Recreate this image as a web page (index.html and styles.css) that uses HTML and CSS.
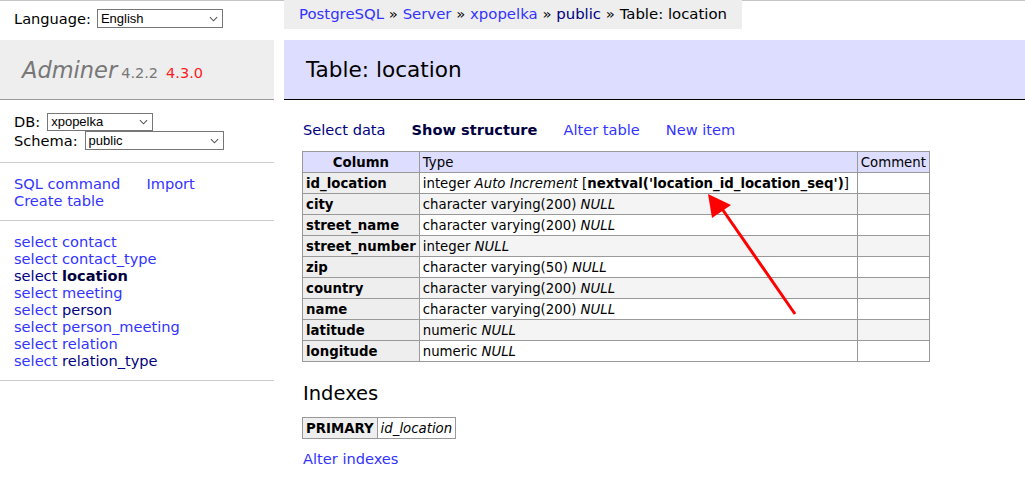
FILE: index.html
```html
<!DOCTYPE html>
<html>
<head>
<meta charset="utf-8">
<link rel="stylesheet" href="styles.css">
</head>
<body>
<div class="page">
  <aside class="menu">
    <div class="lang">
      <span>Language:</span>
      <span class="sel sel-lang"><select><option>English</option></select><svg viewBox="0 0 10 6" class="chev"><path d="M1 1 L5 5 L9 1" fill="none" stroke="#555" stroke-width="1.2"/></svg></span>
    </div>
    <div class="logo"><span class="brand">Adminer</span><span class="ver">4.2.2</span><span class="newver">4.3.0</span></div>
    <div class="dbsel">
      <div class="row">DB: <span class="sel sel-db"><select><option>xpopelka</option></select><svg viewBox="0 0 10 6" class="chev"><path d="M1 1 L5 5 L9 1" fill="none" stroke="#555" stroke-width="1.2"/></svg></span></div>
      <div class="row">Schema: <span class="sel sel-schema"><select><option>public</option></select><svg viewBox="0 0 10 6" class="chev"><path d="M1 1 L5 5 L9 1" fill="none" stroke="#555" stroke-width="1.2"/></svg></span></div>
    </div>
    <div class="cmds">
      <div><a href="#" class="sqlcmd">SQL command</a><a href="#">Import</a></div>
      <div><a href="#">Create table</a></div>
    </div>
    <ul class="tables">
      <li><a href="#">select</a> <a href="#">contact</a></li>
      <li><a href="#">select</a> <a href="#">contact_type</a></li>
      <li><a href="#" class="v">select</a> <a href="#" class="active">location</a></li>
      <li><a href="#">select</a> <a href="#">meeting</a></li>
      <li><a href="#">select</a> <a href="#" class="v">person</a></li>
      <li><a href="#">select</a> <a href="#">person_meeting</a></li>
      <li><a href="#">select</a> <a href="#">relation</a></li>
      <li><a href="#">select</a> <a href="#" class="v">relation_type</a></li>
    </ul>
  </aside>
  <main class="content">
    <div class="crumbs-wrap"><p class="crumbs"><a href="#">PostgreSQL</a> » <a href="#">Server</a> » <a href="#">xpopelka</a> » <a href="#" class="v">public</a> » Table: location</p></div>
    <h2>Table: location</h2>
    <p class="links"><a href="#" class="v">Select data</a><a href="#" class="v active">Show structure</a><a href="#">Alter table</a><a href="#">New item</a></p>
    <table class="struct">
      <thead>
        <tr><th class="colh">Column</th><td class="typecol">Type</td><td>Comment</td></tr>
      </thead>
      <tbody>
        <tr><th>id_location</th><td>integer <i>Auto Increment</i> [<b>nextval('location_id_location_seq')</b>]</td><td></td></tr>
        <tr class="odd"><th>city</th><td>character varying(200) <i>NULL</i></td><td></td></tr>
        <tr><th>street_name</th><td>character varying(200) <i>NULL</i></td><td></td></tr>
        <tr class="odd"><th>street_number</th><td>integer <i>NULL</i></td><td></td></tr>
        <tr><th>zip</th><td>character varying(50) <i>NULL</i></td><td></td></tr>
        <tr class="odd"><th>country</th><td>character varying(200) <i>NULL</i></td><td></td></tr>
        <tr><th>name</th><td>character varying(200) <i>NULL</i></td><td></td></tr>
        <tr class="odd"><th>latitude</th><td>numeric <i>NULL</i></td><td></td></tr>
        <tr><th>longitude</th><td>numeric <i>NULL</i></td><td></td></tr>
      </tbody>
    </table>
    <h3>Indexes</h3>
    <table class="idx">
      <tr><th>PRIMARY</th><td><i>id_location</i></td></tr>
    </table>
    <p class="alteridx"><a href="#">Alter indexes</a></p>
  </main>
</div>
<svg class="arrow" width="1025" height="484" viewBox="0 0 1025 484">
  <line x1="795" y1="314" x2="718" y2="203" stroke="#ff0000" stroke-width="3"/>
  <polygon points="708,194 731,205 712,218" fill="#ff0000"/>
</svg>
</body>
</html>
```

FILE: styles.css
```css
html, body {
  margin: 0;
  padding: 0;
  background: #fff;
}
body {
  font-family: "DejaVu Sans", Verdana, sans-serif;
  font-size: 14.6px;
  color: #000;
  position: relative;
  width: 1025px;
  height: 484px;
  overflow: hidden;
}
a { color: #3333ff; text-decoration: none; }
a.v { color: #000080; }
.page {
  display: grid;
  grid-template-columns: 274px 1fr;
  column-gap: 10px;
  border-top: 1px solid #c4c4c4;
}
.menu { display: flex; flex-direction: column; }
.lang {
  height: 34px;
  padding-bottom: 5px;
  display: flex;
  align-items: center;
  padding-left: 14px;
  gap: 6px;
}
.sel { position: relative; display: inline-block; vertical-align: middle; }
.sel select {
  appearance: none;
  -webkit-appearance: none;
  font-family: "Liberation Sans", Arial, sans-serif;
  font-size: 13px;
  border: 1px solid #767676;
  border-radius: 0;
  background: #fff;
  color: #000;
  padding: 0 0 0 3px;
  margin: 0;
  height: 19px;
  display: block;
}
.sel .chev { position: absolute; right: 5px; top: 7px; width: 9px; height: 6px; pointer-events: none; }
.sel-lang select { width: 126px; }
.sel-db select { width: 106px; height: 18px; }
.sel-schema select { width: 139px; height: 19px; }
.sel-db .chev { top: 6px; }
.logo {
  height: 59px;
  background: #eee;
  border-bottom: 1px solid #999;
  padding-left: 22px;
  line-height: 61px;
  white-space: nowrap;
}
.brand { font-style: italic; font-size: 22.5px; color: #777; }
.ver { font-size: 14.5px; color: #777; margin-left: 4px; }
.newver { font-size: 14.5px; color: #ff1a1a; margin-left: 8px; }
.dbsel {
  padding: 12px 14px 12px;
  border-bottom: 1px solid #ccc;
}
.dbsel .row { height: 19px; display: flex; align-items: center; gap: 7px; }
.cmds {
  padding: 12px 14px 11px;
  border-bottom: 1px solid #ccc;
  line-height: 17px;
}
.sqlcmd { margin-right: 26px; }
.tables {
  list-style: none;
  margin: 0;
  padding: 12px 14px 11px;
  line-height: 17px;
  border-bottom: 1px solid #ccc;
}
a.active { font-weight: bold; color: #000040; }
.content { display: flex; flex-direction: column; align-items: flex-start; }
.crumbs-wrap { height: 39px; }
.crumbs {
  margin: -1px 0 0;
  background: #eee;
  padding: 0 15px;
  height: 29px;
  line-height: 28px;
  font-size: 14.9px;
}
h2 {
  align-self: stretch;
  margin: 0;
  height: 59px;
  background: #ddf;
  border-bottom: 1px solid #000;
  font-weight: normal;
  font-size: 21.6px;
  padding-left: 22px;
  display: flex;
  align-items: center;
}
.links {
  margin: 21px 0 0 19px;
  line-height: 17px;
  display: flex;
  gap: 26px;
}
table {
  border-collapse: collapse;
  border: 1px solid #999;
  margin-left: 18px;
  font-size: 13.3px;
}
th, td {
  border: 1px solid #999;
  padding: 1px 3px;
  height: 18px;
  text-align: left;
  vertical-align: middle;
  white-space: nowrap;
  line-height: 17px;
}
.struct { margin-top: 13px; }
.struct th { background: #eee; font-weight: bold; }
.struct thead th, .struct thead td { background: #ddf; }
.struct thead th.colh { text-align: center; }
.struct .typecol { width: 431px; }
.struct tr.odd td { background: #f4f4f4; }
h3 {
  font-weight: normal;
  font-size: 19.5px;
  margin: 20px 0 0 19px;
  line-height: 24px;
}
.idx { margin-top: 11px; }
.idx th { background: #eee; font-weight: bold; }
.alteridx { margin: 11px 0 0 19px; line-height: 17px; }
.arrow { position: absolute; left: 0; top: 0; pointer-events: none; }
```
